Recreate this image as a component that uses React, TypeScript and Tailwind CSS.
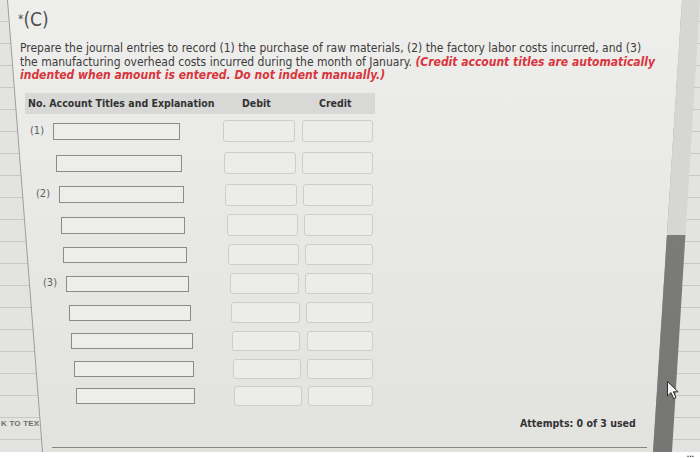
import React from 'react';

const rows = [
  { label: '(1)', h: 'h-[32px]', lead: 'w-[53px]', acc: 'w-[127px] h-[17px]', deb: 'ml-[43px] w-[72px] h-[22px]', cred: 'ml-[7px] w-[71px] h-[22px]' },
  { label: '', h: 'h-[32px]', lead: 'w-[56px]', acc: 'w-[126px] h-[17px]', deb: 'ml-[42px] w-[72px] h-[22px]', cred: 'ml-[6px] w-[71px] h-[22px]' },
  { label: '(2)', h: 'h-[31px]', lead: 'w-[59px]', acc: 'w-[125px] h-[17px]', deb: 'ml-[41px] w-[72px] h-[22px]', cred: 'ml-[6px] w-[70px] h-[22px]' },
  { label: '', h: 'h-[30px]', lead: 'w-[61px]', acc: 'w-[124px] h-[17px]', deb: 'ml-[42px] w-[71px] h-[22px]', cred: 'ml-[6px] w-[69px] h-[22px]' },
  { label: '', h: 'h-[29px]', lead: 'w-[63px]', acc: 'w-[124px] h-[16px]', deb: 'ml-[41px] w-[71px] h-[21px]', cred: 'ml-[6px] w-[68px] h-[21px]' },
  { label: '(3)', h: 'h-[29px]', lead: 'w-[66px]', acc: 'w-[123px] h-[16px]', deb: 'ml-[41px] w-[69px] h-[21px]', cred: 'ml-[6px] w-[68px] h-[21px]' },
  { label: '', h: 'h-[29px]', lead: 'w-[69px]', acc: 'w-[122px] h-[16px]', deb: 'ml-[40px] w-[69px] h-[21px]', cred: 'ml-[6px] w-[67px] h-[21px]' },
  { label: '', h: 'h-[28px]', lead: 'w-[71px]', acc: 'w-[122px] h-[16px]', deb: 'ml-[39px] w-[68px] h-[20px]', cred: 'ml-[7px] w-[66px] h-[20px]' },
  { label: '', h: 'h-[27px]', lead: 'w-[74px]', acc: 'w-[120px] h-[16px]', deb: 'ml-[39px] w-[68px] h-[20px]', cred: 'ml-[6px] w-[66px] h-[20px]' },
  { label: '', h: 'h-[27px]', lead: 'w-[76px]', acc: 'w-[119px] h-[16px]', deb: 'ml-[39px] w-[68px] h-[20px]', cred: 'ml-[6px] w-[65px] h-[20px]' },
];

const font = "font-['DejaVu_Sans_Condensed','DejaVu_Sans',sans-serif]";

function Cursor() {
  return (
    <svg width="14" height="20" viewBox="0 0 14 20">
      <path d="M1.5 1.5 L1.5 16 L5 12.6 L7.6 18.6 L10 17.6 L7.4 11.8 L12.2 11.8 Z" fill="#f7f7f7" stroke="#2e2e2e" strokeWidth="1" strokeLinejoin="round" />
    </svg>
  );
}

export default function App() {
  return (
    <div className={`w-[700px] h-[458px] overflow-hidden flex flex-col bg-white ${font}`}>
      <div className="grid h-[452px] bg-[repeating-linear-gradient(to_bottom,#e3e3e1_0px,#e3e3e1_21px,#c8c8c6_21px,#c8c8c6_22px)]">
        {/* background page on the left */}
        <div className="col-start-1 row-start-1 flex flex-col justify-end pb-[22px] pl-[1px]">
          <div className="text-[8px] font-bold tracking-[0.2px] text-[#6f6f6f] whitespace-nowrap font-['Liberation_Sans',sans-serif]">
            K TO TEX
          </div>
        </div>

        {/* shadow on the panel edge */}
        <div className="col-start-1 row-start-1 bg-[#9d9d9b] [clip-path:polygon(7px_0,683px_0,654px_100%,42px_100%)]" />

        {/* main question panel */}
        <div className="col-start-1 row-start-1 flex flex-col bg-[linear-gradient(to_bottom,#eeeeec,#e2e2df)] [clip-path:polygon(8px_0,682px_0,653px_100%,43px_100%)]">
          <div className="pt-[8px] pl-[18px] text-[19px] leading-[22px] text-[#4f4f4f]">
            <span className="text-[12px] align-top">*</span>(C)
          </div>

          <p className="mt-[12px] pl-[20px] text-[12px] leading-[13.5px] text-[#3c3c3c] whitespace-nowrap">
            Prepare the journal entries to record (1) the purchase of raw materials, (2) the factory labor costs incurred, and (3)
            <br />
            the manufacturing overhead costs incurred during the month of January.{' '}
            <span className="font-bold italic text-[#d8353d]">(Credit account titles are automatically</span>
            <br />
            <span className="font-bold italic text-[#d8353d]">indented when amount is entered. Do not indent manually.)</span>
          </p>

          <div className="mt-[10.5px] ml-[25px] w-[350px] h-[21px] bg-[#d8d8d6] flex items-center text-[10.5px] font-bold text-[#333]">
            <span className="w-[217px] pl-[3px] whitespace-nowrap">No. Account Titles and Explanation</span>
            <span className="w-[77px]">Debit</span>
            <span>Credit</span>
          </div>

          <div className="mt-[1px] flex flex-col">
            {rows.map((r, i) => (
              <div key={i} className={`flex items-center ${r.h}`}>
                <div className={`${r.lead} shrink-0 text-right pr-[9px] text-[11px] text-[#5f5f5f]`}>{r.label}</div>
                <div className={`${r.acc} shrink-0 border-[1.5px] border-[#8b8b89] bg-[#ededeb]`} />
                <div className={`${r.deb} shrink-0 border border-[#cdcdcb] rounded-[3px] bg-[#ecece9]`} />
                <div className={`${r.cred} shrink-0 border border-[#cdcdcb] rounded-[3px] bg-[#ecece9]`} />
              </div>
            ))}
          </div>

          <div className="mt-[7px] pl-[520px] text-[10.5px] leading-[14px] font-bold text-[#333] whitespace-nowrap">
            Attempts: 0 of 3 used
          </div>
          <div className="mt-[17px] ml-[52px] w-[595px] h-px bg-[#858583]" />
        </div>

        {/* scrollbar */}
        <div className="col-start-1 row-start-1 bg-[linear-gradient(to_bottom,#d6d6d4_0px,#d6d6d4_235px,#7b7b79_235px,#767674_100%)] [clip-path:polygon(682px_0,700px_0,672px_100%,653px_100%)]" />

        {/* mouse pointer over the scrollbar */}
        <div className="relative col-start-1 row-start-1 pt-[380px] pl-[666px]">
          <Cursor />
        </div>
      </div>
      <div className="h-[6px] flex justify-end pr-[6px] text-[7px] leading-[6px] font-bold text-[#333]">...</div>
    </div>
  );
}
